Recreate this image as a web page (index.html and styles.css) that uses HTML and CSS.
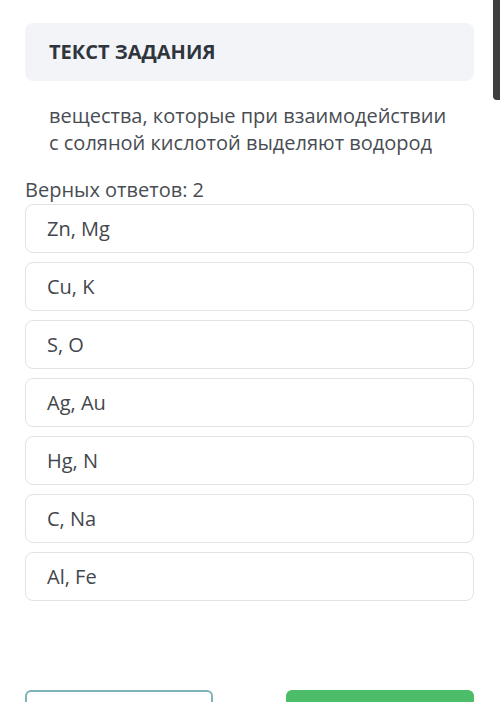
FILE: index.html
```html
<!DOCTYPE html>
<html lang="ru">
<head>
<meta charset="utf-8">
<link rel="stylesheet" href="styles.css">
</head>
<body>
<div class="scrollbar"></div>
<main class="page">
  <div class="task-head">ТЕКСТ ЗАДАНИЯ</div>
  <p class="question">вещества, которые при взаимодействии<br>с соляной кислотой выделяют водород</p>
  <div class="count">Верных ответов: 2</div>
  <div class="options">
    <div class="option">Zn, Mg</div>
    <div class="option">Cu, K</div>
    <div class="option">S, O</div>
    <div class="option">Ag, Au</div>
    <div class="option">Hg, N</div>
    <div class="option">C, Na</div>
    <div class="option">Al, Fe</div>
  </div>
  <div class="buttons">
    <div class="btn btn-outline"></div>
    <div class="btn btn-green"></div>
  </div>
</main>
</body>
</html>
```
FILE: styles.css
```css
html, body {
  margin: 0;
  padding: 0;
  background: #ffffff;
  overflow: hidden;
}
body {
  width: 500px;
  height: 702px;
  font-family: "Open Sans", "Noto Sans", sans-serif;
  color: #444a50;
  position: relative;
}
.scrollbar {
  position: absolute;
  right: 0;
  top: 0;
  width: 7px;
  height: 100px;
  background: #3f3f3f;
  border-bottom-left-radius: 4px;
}
.page {
  padding: 23px 26px 0 25px;
  display: flex;
  flex-direction: column;
}
.task-head {
  background: #f3f4f8;
  border-radius: 8px;
  height: 58px;
  box-sizing: border-box;
  padding: 0 24px;
  display: flex;
  align-items: center;
  font-weight: 700;
  font-size: 20px;
  line-height: 24px;
  color: #2f353d;
}
.question {
  margin: 21px 0 0 24px;
  font-size: 20px;
  line-height: 27px;
  color: #484d53;
}
.count {
  margin-top: 23px;
  font-size: 20px;
  line-height: 22px;
  color: #484d53;
}
.options {
  margin-top: 3px;
  display: flex;
  flex-direction: column;
  gap: 9px;
}
.option {
  height: 49px;
  box-sizing: border-box;
  border: 1px solid #e2e3e5;
  border-radius: 8px;
  padding: 0 21px;
  display: flex;
  align-items: center;
  font-size: 20px;
  line-height: 24px;
  color: #43474c;
}
.buttons {
  margin-top: 89px;
  display: flex;
  justify-content: space-between;
}
.btn {
  width: 188px;
  height: 12px;
  box-sizing: border-box;
  border-radius: 6px 6px 0 0;
}
.btn-outline {
  border: 2px solid #7db4ba;
  border-bottom: none;
}
.btn-green {
  background: #4dbd69;
}
```
